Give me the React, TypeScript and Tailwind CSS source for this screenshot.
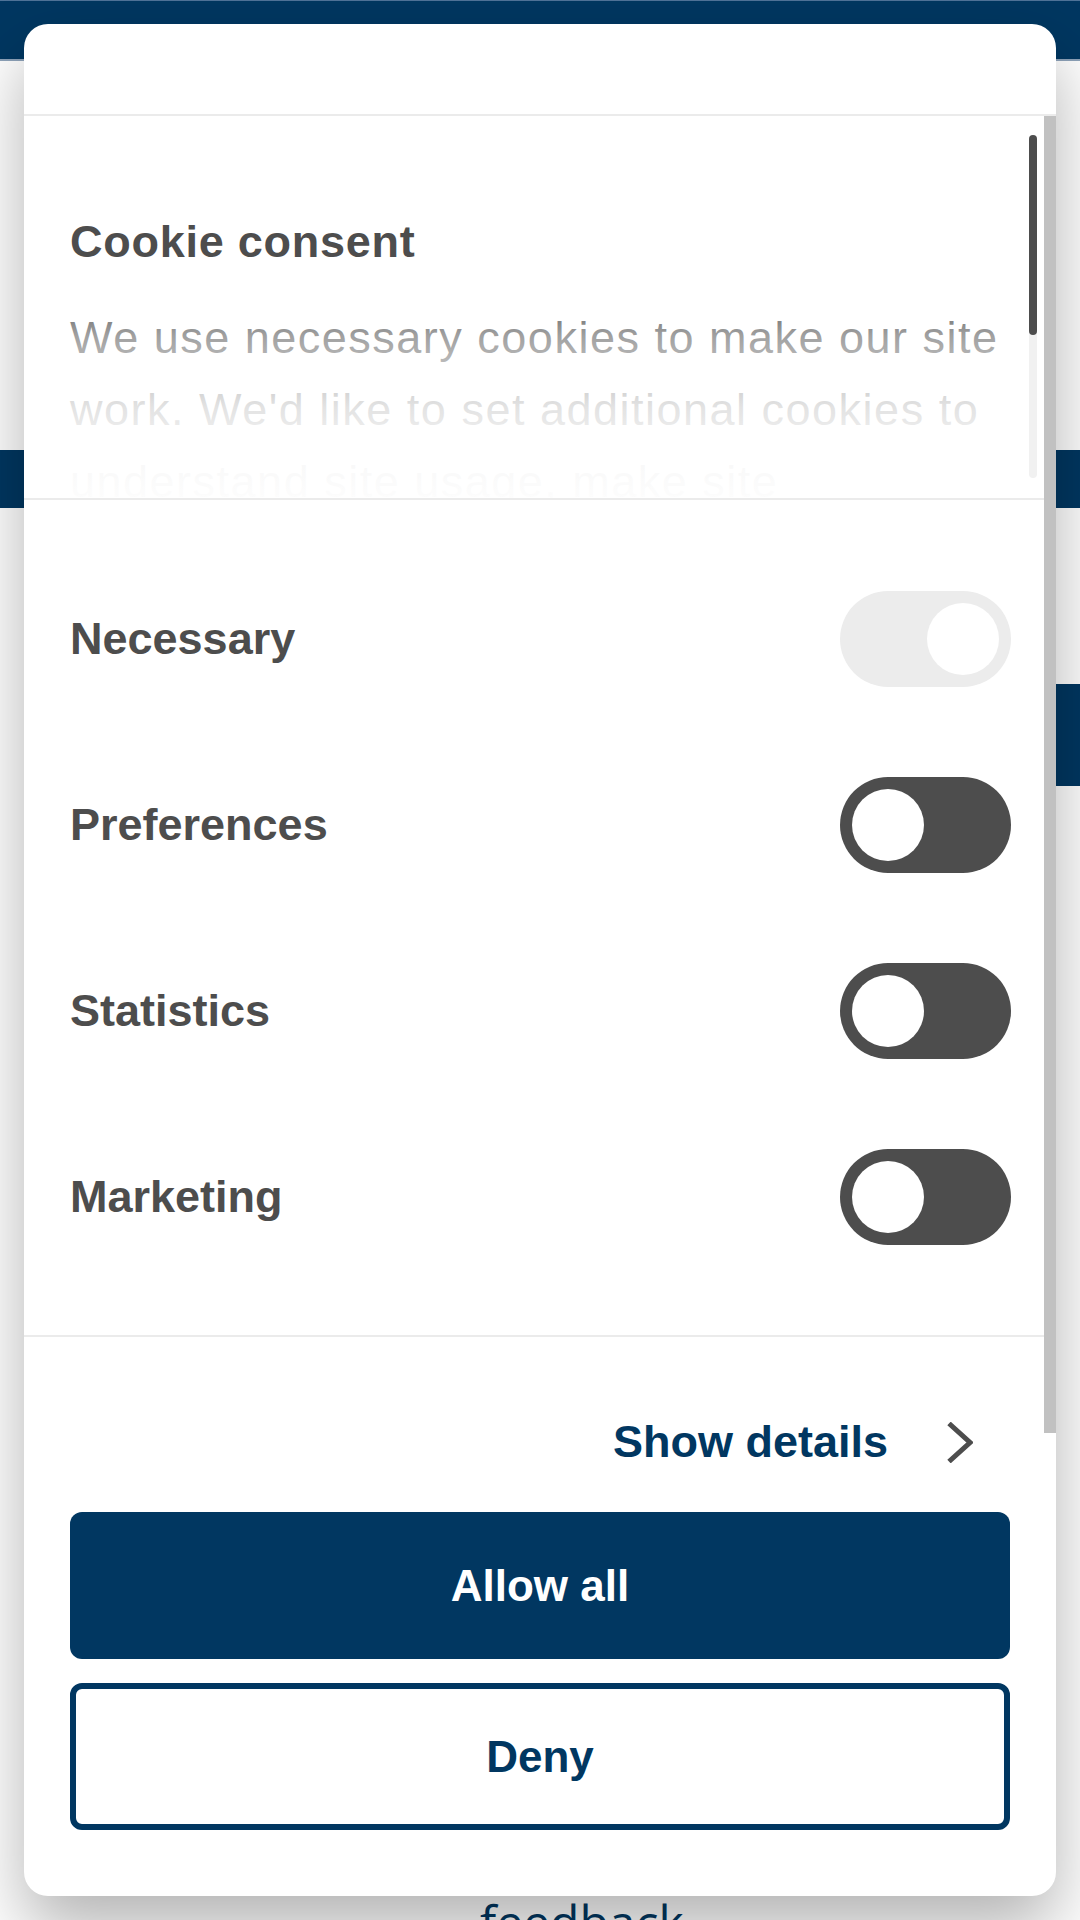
import React from "react";

function Toggle({ on, disabled }: { on?: boolean; disabled?: boolean }) {
  return (
    <div
      className={
        "flex h-[96px] w-[171px] shrink-0 items-center rounded-full px-[12px] " +
        (disabled ? "justify-end bg-[#ececec]" : "justify-start bg-[#4d4d4d]") +
        (on && !disabled ? " justify-end" : "")
      }
    >
      <div className="h-[72px] w-[72px] rounded-full bg-white" />
    </div>
  );
}

function Row({ label, disabled }: { label: string; disabled?: boolean }) {
  return (
    <div className="flex h-[96px] items-center justify-between">
      <span className="text-[45px] font-bold leading-[72px] text-[#4d4d4d]">{label}</span>
      <Toggle on={disabled} disabled={disabled} />
    </div>
  );
}

export default function App() {
  return (
    <div
      className="relative h-[1920px] w-[1080px] overflow-hidden bg-white"
      style={{ fontFamily: '"Liberation Sans", Arial, Helvetica, sans-serif' }}
    >
      {/* Background page */}
      <div className="flex flex-col">
        <div className="h-[61px] border-t border-b-2 border-t-[#4f7398] border-b-[#8ea3ba] bg-[#013761]" />
        <div className="h-[389px]" />
        <div className="h-[58px] bg-[#013761]" />
        <div className="h-[176px]" />
        <div className="flex justify-end">
          <div className="h-[102px] w-[240px] bg-[#013761]" />
        </div>
        <div className="h-[1108px]" />
        <div
          className="pl-[480px] text-[48px] leading-[55px] text-[#013761]"
          style={{ fontFamily: '"Open Sans", "Liberation Sans", sans-serif' }}
        >
          feedback
        </div>
      </div>

      {/* Dialog */}
      <div className="absolute left-[24px] top-[24px] flex h-[1872px] w-[1032px] flex-col overflow-hidden rounded-[24px] bg-white shadow-[0_32px_68px_rgba(0,0,0,0.3)]">
        {/* Header */}
        <div className="h-[92px] shrink-0 border-b-2 border-[#ebebeb]" />

        {/* Scroll text area */}
        <div className="relative h-[384px] shrink-0 overflow-hidden border-b-2 border-[#ebebeb]">
          <div className="pl-[46px] pr-[38px] pt-[90px]">
            <h2 className="text-[45px] font-bold leading-[72px] tracking-[0.75px] text-[#4d4d4d]">Cookie consent</h2>
            <p className="mt-[24px] text-[45px] leading-[72px] tracking-[1.5px] text-[#4d4d4d]">
              We use necessary cookies to make our site work. We'd like to set additional cookies to understand site usage, make site
            </p>
          </div>
          <div className="pointer-events-none absolute bottom-0 left-0 right-0 h-[208px] bg-[linear-gradient(to_bottom,rgba(255,255,255,0)_0%,rgba(255,255,255,0.47)_22%,rgba(255,255,255,0.84)_56%,rgba(255,255,255,0.96)_80%,rgba(255,255,255,0.99)_100%)]" />
          {/* inner scrollbar */}
          <div className="absolute right-[19px] top-[19px] h-[343px] w-[8px] rounded-full bg-[#f1f1f1]">
            <div className="h-[200px] w-[8px] rounded-full bg-[#4d4d4d]" />
          </div>
        </div>

        {/* Toggles */}
        <div className="flex h-[837px] shrink-0 flex-col gap-[90px] border-b-2 border-[#ebebeb] pb-[90px] pl-[46px] pr-[45px] pt-[91px]">
          <Row label="Necessary" disabled />
          <Row label="Preferences" />
          <Row label="Statistics" />
          <Row label="Marketing" />
        </div>

        {/* Footer */}
        <div className="flex flex-col px-[46px] pt-[69px]">
          <div className="flex h-[72px] items-center justify-end pr-[37px]">
            <span className="text-[45px] font-bold leading-[72px] text-[#013761]">Show details</span>
            <svg className="ml-[59px]" width="26" height="41" viewBox="0 0 26 41" fill="none">
              <polyline points="2,1.5 23,20.5 2,39.5" stroke="#4d4d4d" strokeWidth="5" fill="none" />
            </svg>
          </div>
          <button className="mt-[34px] flex h-[147px] items-center justify-center rounded-[12px] bg-[#013761] text-[44px] font-bold text-white">
            Allow all
          </button>
          <button className="mt-[24px] flex h-[147px] items-center justify-center rounded-[12px] border-[6px] border-[#013761] bg-white text-[44px] font-bold text-[#013761]">
            Deny
          </button>
        </div>

        {/* outer scrollbar */}
        <div className="absolute right-0 top-[92px] h-[1317px] w-[12px] bg-[#c1c1c1]" />
      </div>
    </div>
  );
}
